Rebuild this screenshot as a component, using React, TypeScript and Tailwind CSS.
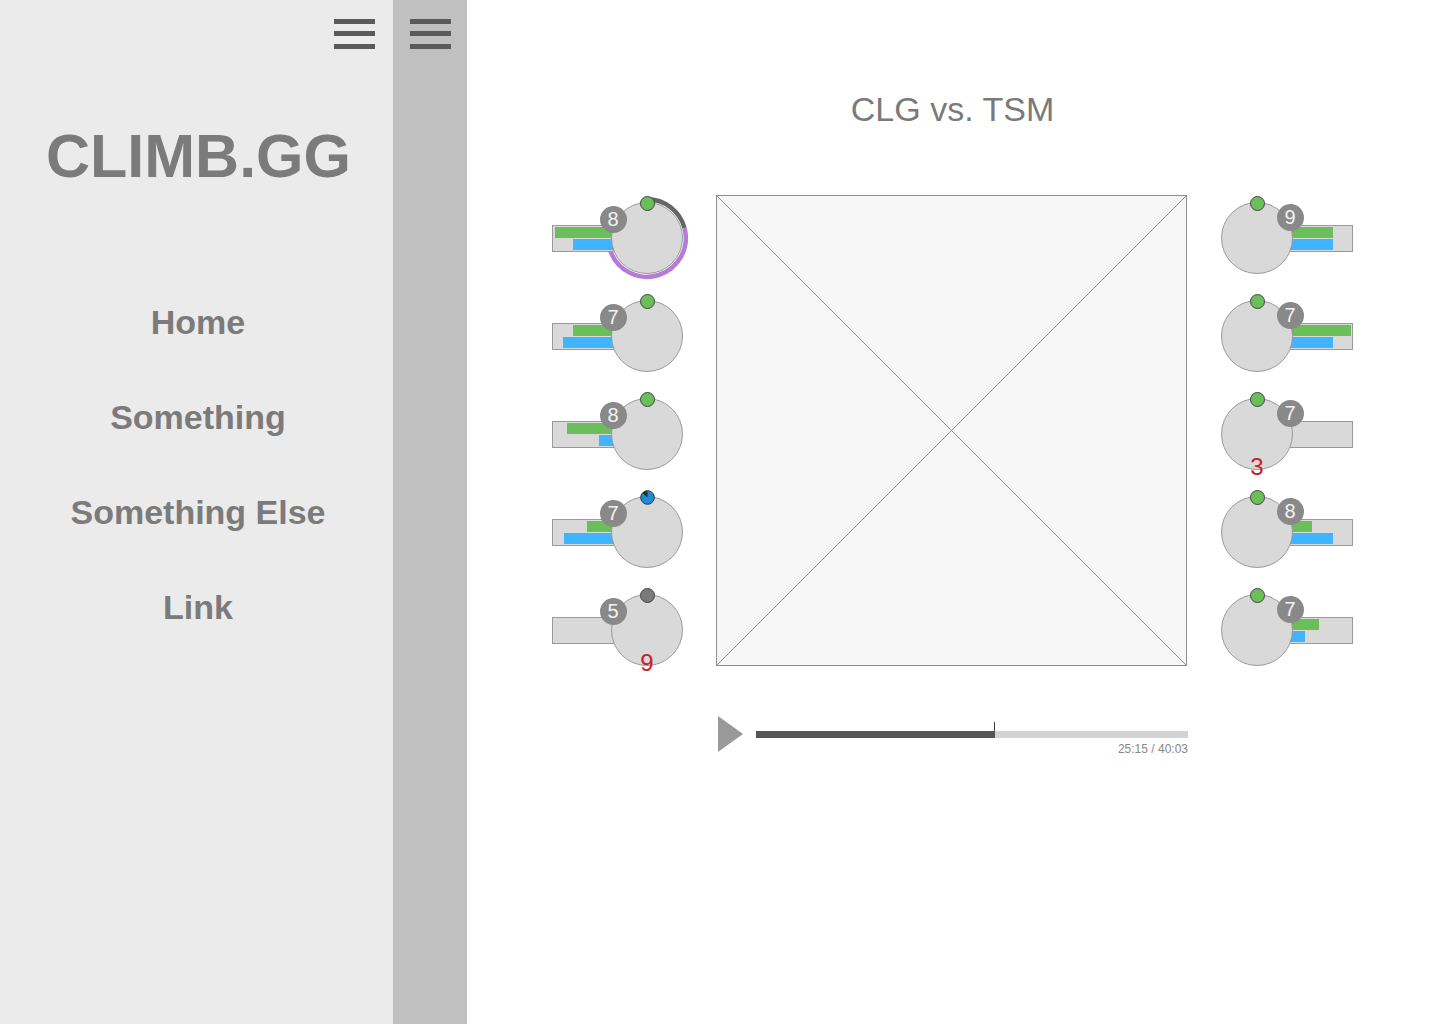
import React from "react";

type Player = {
  lvl: number;
  g: number;
  b: number;
  dot: "green" | "blue" | "gray";
  ring?: boolean;
  dead?: number;
};

const leftTeam: Player[] = [
  { lvl: 8, g: 92, b: 74, dot: "green", ring: true },
  { lvl: 7, g: 74, b: 84, dot: "green" },
  { lvl: 8, g: 80, b: 48, dot: "green" },
  { lvl: 7, g: 60, b: 83, dot: "blue" },
  { lvl: 5, g: 0, b: 0, dot: "gray", dead: 9 },
];

const rightTeam: Player[] = [
  { lvl: 9, g: 75, b: 75, dot: "green" },
  { lvl: 7, g: 93, b: 75, dot: "green" },
  { lvl: 7, g: 0, b: 0, dot: "green", dead: 3 },
  { lvl: 8, g: 54, b: 75, dot: "green" },
  { lvl: 7, g: 61, b: 47, dot: "green" },
];

function Hamburger() {
  return (
    <div className="flex flex-col w-[41px]">
      <div className="h-[5px] bg-[#5a5a5a]" />
      <div className="h-[5px] bg-[#5a5a5a] mt-[7px]" />
      <div className="h-[5px] bg-[#5a5a5a] mt-[8px]" />
    </div>
  );
}

function Dot({ kind }: { kind: Player["dot"] }) {
  if (kind === "blue") {
    return (
      <svg width="15" height="15" viewBox="0 0 15 15" className="absolute left-[27.5px] top-[-7.5px]">
        <circle cx="7.5" cy="7.5" r="6.8" fill="#1b8ed6" stroke="#333" strokeWidth="1" />
        <path d="M7.5 7.5 L2.52 3.32 A6.5 6.5 0 0 1 7.5 1 Z" fill="#2b2b2b" />
      </svg>
    );
  }
  return (
    <div
      className={
        kind === "green"
          ? "absolute left-[27.5px] top-[-7.5px] w-[15px] h-[15px] rounded-full bg-[#6abf5a] border border-[#444]"
          : "absolute left-[27.5px] top-[-7.5px] w-[15px] h-[15px] rounded-full bg-[#7a7a7a] border border-[#444]"
      }
    />
  );
}

function Token({ p, side }: { p: Player; side: "left" | "right" }) {
  return (
    <div className="relative w-[72px] h-[72px] shrink-0 rounded-full bg-[#d9d9d9] border border-[#9a9a9a] z-10">
      {p.ring && (
        <svg width="84" height="84" viewBox="0 0 84 84" className="absolute left-[-7px] top-[-7px]">
          <path d="M42 3.2 A38.8 38.8 0 0 1 79.48 31.96" fill="none" stroke="#666" strokeWidth="4.5" />
          <path d="M79.48 31.96 A38.8 38.8 0 0 1 5.54 55.27" fill="none" stroke="#b57cd6" strokeWidth="4.5" />
        </svg>
      )}
      <div
        className={
          side === "left"
            ? "absolute left-[-12.5px] top-[2.5px] w-[27px] h-[27px] rounded-full bg-[#898989] text-[#f2f2f2] text-[20px] leading-[27px] text-center"
            : "absolute left-[54.5px] top-[0.5px] w-[27px] h-[27px] rounded-full bg-[#898989] text-[#f2f2f2] text-[20px] leading-[27px] text-center"
        }
      >
        {p.lvl}
      </div>
      <Dot kind={p.dot} />
      {p.dead !== undefined && (
        <div className="absolute left-0 right-0 top-[56px] text-center text-[24px] leading-none text-[#c8202a]">
          {p.dead}
        </div>
      )}
    </div>
  );
}

function Bars({ p, side }: { p: Player; side: "left" | "right" }) {
  return (
    <div
      className={
        side === "left"
          ? "w-[96px] h-[27px] shrink-0 border border-[#9a9a9a] bg-[#d9d9d9] flex flex-col items-end pt-[1px] gap-[1px]"
          : "w-[96px] h-[27px] shrink-0 border border-[#9a9a9a] bg-[#d9d9d9] flex flex-col items-start pt-[1px] gap-[1px] ml-[-36px]"
      }
    >
      <div className="h-[11px] bg-[#6abf5a]" style={{ width: p.g }} />
      <div className="h-[11px] bg-[#41b4ff]" style={{ width: p.b }} />
    </div>
  );
}

function PlayerRow({ p, side }: { p: Player; side: "left" | "right" }) {
  if (side === "left") {
    return (
      <div className="h-[98px] w-[136px] flex items-center">
        <Bars p={p} side="left" />
        <div className="ml-[-37px]">
          <Token p={p} side="left" />
        </div>
      </div>
    );
  }
  return (
    <div className="h-[98px] w-[132px] flex items-center">
      <Token p={p} side="right" />
      <Bars p={p} side="right" />
    </div>
  );
}

export default function App() {
  return (
    <div className="flex w-[1440px] h-[1024px] bg-white font-['Liberation_Sans',Arial,sans-serif]">
      <aside className="w-[393px] shrink-0 bg-[#ebebeb] flex flex-col">
        <div className="flex justify-end pr-[18px] pt-[19px]">
          <Hamburger />
        </div>
        <div className="mt-[77px] pl-[4px] text-center text-[61px] leading-none font-bold text-[#7b7b7b]">
          CLIMB.GG
        </div>
        <nav className="mt-[88px] pl-[3px] flex flex-col text-[34px] font-bold text-[#7b7b7b]">
          {["Home", "Something", "Something Else", "Link"].map((item) => (
            <a key={item} className="h-[95px] leading-[95px] text-center">
              {item}
            </a>
          ))}
        </nav>
      </aside>

      <div className="w-[74px] shrink-0 bg-[#c0c0c0] flex justify-center pt-[19px]">
        <Hamburger />
      </div>

      <main className="flex-1 flex flex-col">
        <h1 className="pt-[92px] pr-[2px] text-center text-[34px] leading-none text-[#7a7a7a]">CLG vs. TSM</h1>

        <div className="mt-[63px] pl-[85px] flex items-start">
          <div className="flex flex-col">
            {leftTeam.map((p, i) => (
              <PlayerRow key={i} p={p} side="left" />
            ))}
          </div>

          <div className="ml-[28px] mt-[6px] flex flex-col w-[472px]">
            <div className="w-[471px] h-[471px] border border-[#8f8f8f] bg-[#f7f7f7]">
              <svg width="100%" height="100%" viewBox="0 0 100 100" preserveAspectRatio="none">
                <line x1="0" y1="0" x2="100" y2="100" stroke="#8f8f8f" strokeWidth="1" vectorEffect="non-scaling-stroke" />
                <line x1="100" y1="0" x2="0" y2="100" stroke="#8f8f8f" strokeWidth="1" vectorEffect="non-scaling-stroke" />
              </svg>
            </div>

            <div className="mt-[50px] flex items-start">
              <svg width="25" height="36" viewBox="0 0 25 36" className="ml-[2px] shrink-0">
                <polygon points="0,0 25,18 0,36" fill="#999" />
              </svg>
              <div className="flex-1 ml-[13px] pt-[15px]">
                <div className="relative h-[7px] flex">
                  <div className="w-[239px] bg-[#555]" />
                  <div className="flex-1 bg-[#d3d3d3]" />
                  <div className="absolute left-[238px] top-[-9px] w-[1px] h-[9px] bg-[#444]" />
                </div>
                <div className="mt-[5px] text-right text-[12px] leading-none text-[#888]">25:15 / 40:03</div>
              </div>
            </div>
          </div>

          <div className="ml-[33px] flex flex-col">
            {rightTeam.map((p, i) => (
              <PlayerRow key={i} p={p} side="right" />
            ))}
          </div>
        </div>
      </main>
    </div>
  );
}
